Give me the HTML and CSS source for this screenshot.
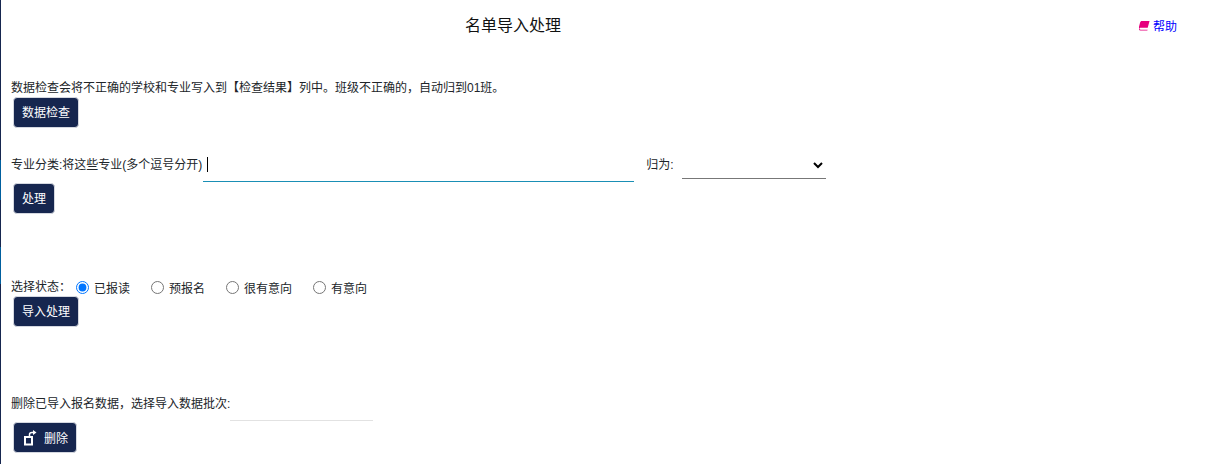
FILE: index.html
```html
<!DOCTYPE html>
<html lang="en">
<head>
	<meta charset="UTF-8">
	<title>名单导入处理</title>
	<link rel="stylesheet" href="styles.css">
</head>
<body>
	<div class="page">
		<div class="header">
			<h1 class="title">名单导入处理</h1>
			<a class="help" href="javascript:;">
				<svg class="help-icon" viewBox="0 0 12 11" width="11" height="11">
					<path d="M3.2 0.5h8.300l-2 7.500h-7.600c-0.900 0-1.400 0.500-1.400 1s0.500 1 1.400 1h7.500l-0.300 1h-7.600c-1.500 0-2.200-1-2-2.200l1.700-6.600c0.200-1 1-1.700 2-1.700z" fill="#e6007e"/>
				</svg>
				帮助
			</a>
		</div>

		<div class="section section-check">
			<div class="line">数据检查会将不正确的学校和专业写入到【检查结果】列中。班级不正确的，自动归到01班。</div>
			<button class="btn">数据检查</button>
		</div>

		<div class="section section-major">
			<div class="row">
				<label class="line">专业分类:将这些专业(多个逗号分开)</label>
				<div class="major-input"><span class="caret"></span></div>
				<label class="line to-label">归为:</label>
				<select class="to-select"><option></option></select>
			</div>
			<button class="btn">处理</button>
		</div>

		<div class="section section-status">
			<div class="row radios">
				<span class="line status-label">选择状态：</span>
				<label class="radio"><input type="radio" name="status" checked>已报读</label>
				<label class="radio"><input type="radio" name="status">预报名</label>
				<label class="radio"><input type="radio" name="status">很有意向</label>
				<label class="radio"><input type="radio" name="status">有意向</label>
			</div>
			<button class="btn">导入处理</button>
		</div>

		<div class="section section-delete">
			<div class="row">
				<span class="line">删除已导入报名数据，选择导入数据批次:</span>
				<div class="batch-input"></div>
			</div>
			<button class="btn btn-icon">
				<svg viewBox="0 0 14 16" width="14" height="16">
					<path d="M1 7h7v7.500h-7z" fill="none" stroke="#fff" stroke-width="2"/>
					<path d="M5.500 6v-1.500c0-1.500 1-2 2.500-2h1.500" fill="none" stroke="#fff" stroke-width="1.500"/>
					<path d="M9 0l3.500 2.500-3.500 2.500z" fill="#fff"/>
				</svg>
				删除
			</button>
		</div>
	</div>
</body>
</html>
```

FILE: styles.css
```css
*{
	box-sizing: border-box;
}
html,body{
	margin: 0;
	padding: 0;
	height: 100%;
}
body{
	background-color: #fff;
	/* the strip of the neighbouring window on the far left */
	background-image: linear-gradient(#16264f 0, #16264f 160px, #005f9e 160px, #005f9e 200px, #16264f 200px, #16264f 247px, #005f9e 247px, #005f9e 284px, #16264f 284px);
	background-size: 1px 100%;
	background-repeat: no-repeat;
	padding-left: 1px;
	font-family: "Liberation Sans", "Noto Sans CJK SC", sans-serif;
	font-size: 12px;
	color: #212529;
	overflow: hidden;
}
.page{
	padding: 0 30px 0 10px;
}
.header{
	display: flex;
	justify-content: center;
	align-items: center;
	height: 52px;
	padding-right: 162px;
	position: relative;
}
.title{
	margin: 0 0 4px;
	font-size: 16px;
	font-weight: 400;
	color: #111;
}
.help{
	position: absolute;
	right: 0;
	top: 17px;
	display: flex;
	align-items: center;
	gap: 3px;
	color: #00f;
	text-decoration: none;
}
.line{
	line-height: 18px;
}
.row{
	display: flex;
	align-items: center;
}
.btn{
	display: block;
	height: 31px;
	margin-left: 2px;
	padding: 0 8px 2px;
	border: 1px solid #d5d8e0;
	border-radius: 4px;
	background-color: #16264f;
	color: #fff;
	font-family: inherit;
	font-size: 12px;
}
.btn-icon{
	display: flex;
	align-items: center;
	gap: 6px;
	padding: 0 8px 0 10px;
}
.section-check{
	padding-top: 27px;
}
.section-major{
	padding-top: 20px;
}
.section-major .btn{
	margin-top: 1px;
}
.major-input{
	width: 431px;
	height: 34px;
	margin-left: 1px;
	border-bottom: 1px solid #1a8fb5;
	display: flex;
	align-items: center;
	padding-left: 4px;
}
.caret{
	width: 1px;
	height: 15px;
	background-color: #000;
}
.to-label{
	margin-left: 12px;
}
.to-select{
	width: 144px;
	height: 28px;
	margin-left: 8px;
	border: 0;
	border-bottom: 1px solid #777;
	background-color: #fff;
	font-size: 12px;
}
.section-status{
	padding-top: 64px;
}
.status-label{
	width: 64px;
}
.radio{
	display: flex;
	align-items: center;
	margin-right: 20px;
	color: #212529;
}
.radio input{
	margin: 0 5px 0 1px;
	width: 13px;
	height: 13px;
}
.section-delete{
	padding-top: 60px;
}
.batch-input{
	width: 143px;
	height: 34px;
	border-bottom: 1px solid #e2e2e2;
}
.section-delete .btn{
	margin-top: 1px;
}
```
